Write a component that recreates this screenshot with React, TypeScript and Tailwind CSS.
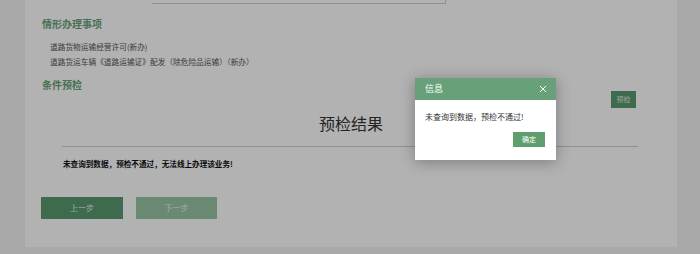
import React from 'react';

const font = { fontFamily: '"Noto Sans CJK SC", "Noto Sans", sans-serif' };

export default function App() {
  return (
    <div className="relative w-[700px] h-[254px] overflow-hidden bg-[#f2f2f2]" style={font}>
      {/* 主面板 */}
      <div className="ml-[25px] w-[652px] h-[247px] bg-white flex flex-col">
        <div className="ml-[127px] w-[294px] h-[4px] bg-white border-b border-r border-[#d0d0d0]" />

        <h3 className="mt-[13px] ml-[17px] text-[10px] leading-[14px] font-bold text-[#68a179]">情形办理事项</h3>
        <div className="mt-[8px] ml-[25px] flex flex-col text-[7.7px] leading-[15px] text-[#555]">
          <span>道路货物运输经营许可(新办)</span>
          <span>道路货运车辆《道路运输证》配发（除危险品运输）（新办）</span>
        </div>

        <h3 className="mt-[9px] ml-[17px] text-[10px] leading-[14px] font-bold text-[#68a179]">条件预检</h3>

        <div className="flex justify-end mr-[41px] -mt-[1px]">
          <button className="w-[25px] h-[17px] bg-[#5a9970] text-[7px] text-[#dfe9e2] leading-none">预检</button>
        </div>

        <div className="mt-[4px] text-center text-[16px] leading-[22px] text-[#333]">预检结果</div>
        <div className="mt-[12px] ml-[37px] mr-[39px] border-t border-[#cfcfcf]" />

        <p className="mt-[11px] ml-[38px] text-[7.6px] leading-[12px] font-bold text-[#111]">
          未查询到数据，预检不通过，无法线上办理该业务!
        </p>

        <div className="mt-[27px] ml-[16px] flex gap-[13px]">
          <button className="w-[82px] h-[22px] bg-[#5a9970] text-[8px] text-[#e4ece6]">上一步</button>
          <button className="w-[81px] h-[22px] bg-[#99c5a5] text-[8px] text-[#e8efe9]">下一步</button>
        </div>
      </div>

      {/* 遮罩 */}
      <div className="absolute inset-0 bg-black/30" />

      {/* 信息弹窗 */}
      <div className="absolute left-[415px] top-[78px] w-[141px] h-[82px] bg-white flex flex-col shadow-[0_2px_14px_rgba(0,0,0,0.3)]">
        <div className="h-[22px] bg-[#68a179] flex items-center justify-between pl-[10px] pr-[9px]">
          <span className="text-[9px] text-white">信息</span>
          <svg width="8" height="8" viewBox="0 0 8 8" className="stroke-white">
            <path d="M1 1 L7 7 M7 1 L1 7" strokeWidth="1" />
          </svg>
        </div>
        <p className="mt-[11px] ml-[10px] text-[8px] leading-[12px] text-[#333]">未查询到数据，预检不通过!</p>
        <div className="mt-[9px] mr-[11px] flex justify-end">
          <button className="w-[32px] h-[15px] bg-[#5e9e6f] text-[7px] text-white leading-none">确定</button>
        </div>
      </div>
    </div>
  );
}
